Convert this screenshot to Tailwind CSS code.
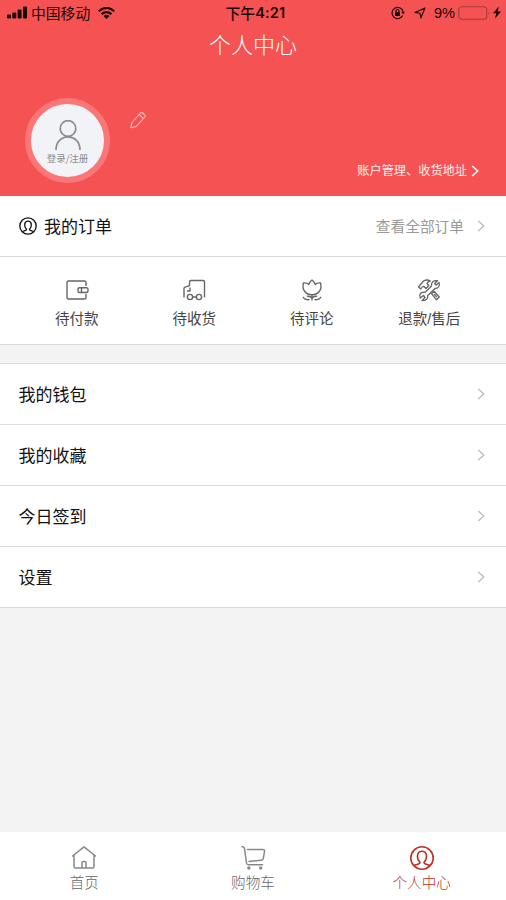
<!DOCTYPE html>
<html lang="zh-CN">
<head>
<meta charset="utf-8">
<title>个人中心</title>
<script src="https://cdn.jsdelivr.net/npm/@tailwindcss/browser@4"></script>
</head>
<body class="bg-[#f3f3f3]">
<div class="w-[506px] h-[900px] flex flex-col overflow-hidden font-['Noto_Sans_CJK_SC',sans-serif] text-[#111]">
  <header class="h-[196px] shrink-0 bg-[#f55353] flex flex-col">
    <div class="h-[25px] grid grid-cols-3 items-center text-[#1d0505]">
      <div class="flex items-center pl-[7px]">
        <svg class="w-5 h-[13px]" viewBox="0 0 20 13" fill="currentColor"><rect x="0" y="8.5" width="4" height="4" rx="1"/><rect x="5.3" y="6.5" width="4" height="6" rx="1"/><rect x="10.6" y="3.5" width="4" height="9" rx="1"/><rect x="16" y="0.5" width="4" height="12" rx="1"/></svg>
        <span class="ml-1 text-[14.8px] leading-6">中国移动</span>
        <svg class="ml-2 w-[17px] h-3" viewBox="0 0 17 12" fill="none" stroke="currentColor" stroke-width="2.2"><path d="M.8 4.3Q8.500-2.500 16.200 4.300M3.500 7.200Q8.500 3 13.500 7.200"/><path d="M5.500 9Q8.500 6.700 11.500 9L8.500 12Z" fill="currentColor" stroke="none"/></svg>
      </div>
      <div class="flex items-center justify-center text-[14.8px] leading-6 font-medium pl-[5px]"><span>下午</span><span class="font-['Inter',sans-serif] font-semibold text-[14.5px] tracking-[0.2px]">4:21</span></div>
      <div class="flex items-center justify-end pr-[5px]">
        <svg class="w-[14px] h-[14px]" viewBox="0 0 14 14" fill="none" stroke="currentColor" stroke-width="1.2"><path d="M11.600 9.500A5.600 5.600 0 1 1 12 5.500"/><path d="M10.300 5.700H14L12.200 8.300Z" fill="currentColor" stroke="none"/><rect x="4" y="6.200" width="5" height="3.800" fill="currentColor" stroke="none"/><path d="M5 6.500V5a1.500 1.500 0 0 1 3 0v1.500"/></svg>
        <svg class="ml-[9px] w-3 h-3" viewBox="0 0 12 12" fill="none" stroke="currentColor" stroke-width="1.1" stroke-linejoin="round"><path d="M11 1L1 5.400L6 6.200L6.800 11Z"/></svg>
        <span class="ml-2 font-['Liberation_Sans',sans-serif] text-[14.6px] leading-6">9%</span>
        <svg class="ml-[3px] w-8 h-[14px]" viewBox="0 0 32 14" fill="none"><rect x=".8" y=".8" width="28" height="12.400" rx="3" stroke="#a93a3a" stroke-width="1.100"/><path d="M30.500 5.300Q32.200 7 30.500 8.700Z" fill="#a93a3a"/></svg>
        <svg class="ml-[3px] w-[8px] h-[13px]" viewBox="0 0 8 13" fill="currentColor"><path d="M5.800.5L0 7.300H3.300L2 12.500L8 5.500H4.700Z"/></svg>
      </div>
    </div>
    <h1 class="h-[39px] text-center text-[22px] leading-[37px] font-light text-white">个人中心</h1>
    <div class="flex-1 flex justify-between pl-[25px] pr-[27px]">
      <div class="flex items-start pt-[34px]">
        <div class="size-[85px] rounded-full border-[6px] border-[#fb7777] bg-[#f2f3f7] flex flex-col items-center pt-4 text-[#8a8b8e]">
          <svg class="w-[26px] h-[30px] shrink-0" viewBox="0 0 26 30" fill="none" stroke="currentColor" stroke-width="1.700"><circle cx="13" cy="8.500" r="7.800"/><path d="M1 30C1 12.500 25 12.500 25 30"/></svg>
          <span class="text-[9.5px] leading-[14px] mt-px whitespace-nowrap">登录/注册</span>
        </div>
        <svg class="ml-5 mt-[13px] w-4 h-[18px]" viewBox="0 0 16 18" fill="none" stroke="#ffbebe" stroke-width="1.100" stroke-linejoin="round"><path d="M.8 16.800L2 11.500L10.500 2Q11.500.8 12.700 2L14.800 4Q15.600 5 14.800 6L6.200 15.500Z"/><path d="M9.300 3.400L13.400 7.500"/></svg>
      </div>
      <div class="self-end flex items-center mb-[15px] text-white/90 text-[12.2px] leading-5"><span class="pb-px">账户管理、收货地址</span>
        <svg class="ml-[4px] w-2 h-3" viewBox="0 0 8 12" fill="none" stroke="#fff" stroke-width="1.600"><path d="M1.200 1L6.700 6L1.200 11"/></svg></div>
    </div>
  </header>

  <section class="h-[149px] shrink-0 bg-white border-b border-[#d9d9d9]">
    <div class="h-[61px] border-b border-[#d9d9d9] flex items-center pl-[19px] pr-[21px]">
      <svg class="w-[18px] h-[18px]" viewBox="0 0 24 24" fill="none" stroke="currentColor" stroke-width="1.800"><circle cx="12" cy="12" r="10.900"/><path d="M4.500 19.500C6 18 10 18.800 10 16.200C6.200 12.500 6.800 5.500 12 5.500S17.800 12.500 14 16.200C14 18.800 18 18 19.500 19.500"/></svg>
      <span class="ml-[7px] text-[17px] leading-6">我的订单</span>
      <span class="ml-auto pb-px text-[14.7px] leading-6 text-[#999]">查看全部订单</span>
      <svg class="ml-[13px] w-2 h-3" viewBox="0 0 8 12" fill="none" stroke="#bcbcbc" stroke-width="1.300"><path d="M1.200 1L6.800 6L1.200 11"/></svg>
    </div>
    <div class="grid grid-cols-4 px-[18px] pt-[21px] text-[14.5px] leading-6 text-[#444]">
      <div class="flex flex-col items-center">
        <svg class="w-6 h-6" viewBox="0 0 24 24" fill="none" stroke="#666" stroke-width="1.400" stroke-linejoin="round"><path d="M21 8V4.500Q21 3 19.500 3H3.500Q2 3 2 4.500V19.500Q2 21 3.500 21H19.500Q21 21 21 19.500V16"/><rect x="13" y="9.700" width="10" height="4.800" rx="1.500"/><path d="M16.500 10V14"/></svg>
        <span class="mt-1">待付款</span></div>
      <div class="flex flex-col items-center">
        <svg class="w-6 h-6" viewBox="0 0 24 24" fill="none" stroke="#666" stroke-width="1.400" stroke-linejoin="round"><path d="M2 19.500V10.500Q2 9.500 3 9.200L7.500 7.700V4Q7.500 2.500 9 2.500H21Q22.500 2.500 22.500 4V19.500M8 9.500V13H5M10.500 19H14"/><circle cx="8" cy="19" r="2.600"/><circle cx="17" cy="19" r="2.600"/></svg>
        <span class="mt-1">待收货</span></div>
      <div class="flex flex-col items-center">
        <svg class="w-6 h-6" viewBox="0 0 24 24" fill="none" stroke="#666" stroke-width="1.400" stroke-linejoin="round" stroke-linecap="round"><path d="M3.500 5Q6.500 4.500 8.700 6.500Q10 3.500 12 2Q14 3.500 15.300 6.500Q17.500 4.500 20.500 5C22.500 12 18 16.800 12 16.800S1.500 12 3.500 5ZM12 17V22M12 20.200Q10 17.800 7.500 18.300M12 20.200Q14 17.800 16.500 18.300M3.300 19.300Q4.500 21.800 9 21.800M20.700 19.300Q19.500 21.800 15 21.800"/></svg>
        <span class="mt-1">待评论</span></div>
      <div class="flex flex-col items-center">
        <svg class="w-6 h-6" viewBox="0 0 24 24" fill="none" stroke="#666" stroke-width="1.300" stroke-linejoin="round"><path d="M1.500 9L6.500 3Q10 1 13.300 3Q10.800 3.500 10 5.500L11.800 7.500L9 10.500L7 8.500Q5.500 8 3.800 11ZM14.500 15.700L17 13.200L22.300 19L19.500 21.800ZM17 16L19.800 19"/><path d="M20.500 2.700L17.700 5.500L19 7.200L22 4.500Q23.500 10 18 10.500L10.800 17.500Q11 23 5 22.700L8 19.500L6.500 17.500L3.300 20Q1 14 8.500 14L14.500 8Q14 2 20.500 2.700Z"/></svg>
        <span class="mt-1">退款<span class="font-['Liberation_Sans',sans-serif]">/</span>售后</span></div>
    </div>
  </section>

  <nav class="mt-[18px] shrink-0 bg-white border-t border-[#d9d9d9] text-[17px] leading-6">
    <a class="h-[61px] flex items-center justify-between pl-[18.5px] pr-[21px] pb-px border-b border-[#dedede]"><span>我的钱包</span><svg class="w-2 h-3" viewBox="0 0 8 12" fill="none" stroke="#bcbcbc" stroke-width="1.300"><path d="M1.200 1L6.800 6L1.200 11"/></svg></a>
    <a class="h-[61px] flex items-center justify-between pl-[18.5px] pr-[21px] pb-px border-b border-[#dedede]"><span>我的收藏</span><svg class="w-2 h-3" viewBox="0 0 8 12" fill="none" stroke="#bcbcbc" stroke-width="1.300"><path d="M1.200 1L6.800 6L1.200 11"/></svg></a>
    <a class="h-[61px] flex items-center justify-between pl-[18.5px] pr-[21px] border-b border-[#d9d9d9]"><span>今日签到</span><svg class="w-2 h-3" viewBox="0 0 8 12" fill="none" stroke="#bcbcbc" stroke-width="1.300"><path d="M1.200 1L6.800 6L1.200 11"/></svg></a>
    <a class="h-[61px] flex items-center justify-between pl-[18.5px] pr-[21px] border-b border-[#d9d9d9]"><span>设置</span><svg class="w-2 h-3" viewBox="0 0 8 12" fill="none" stroke="#bcbcbc" stroke-width="1.300"><path d="M1.200 1L6.800 6L1.200 11"/></svg></a>
  </nav>

  <footer class="mt-auto h-[68px] shrink-0 bg-white grid grid-cols-3 pt-[13px] text-[14.6px] leading-[22px] font-light text-[#666]">
    <div class="flex flex-col items-center">
      <svg class="w-[26px] h-[26px]" viewBox="0 0 26 26" fill="none" stroke="#888" stroke-width="1.500" stroke-linejoin="round" stroke-linecap="round"><path d="M1.500 11L13 1.800L24.500 11M3 10V21.500Q3 23 4.500 23H21.500Q23 23 23 21.500V10M11 22.500V17.500Q11 16.500 12 16.500H14Q15 16.500 15 17.500V22.500"/></svg>
      <span>首页</span></div>
    <div class="flex flex-col items-center">
      <svg class="w-[26px] h-[26px]" viewBox="0 0 26 26" fill="none" stroke="#888" stroke-width="1.500" stroke-linejoin="round" stroke-linecap="round"><path d="M2 1.800Q4 1.500 4.500 3.500L6.500 18Q6.800 19.800 8.500 19.800H22.500M7.500 4.500H22.800Q24.800 4.500 24.500 6.500L23.300 13.500Q23 15 21.300 15.200L9 16.500"/><g fill="#888" stroke="none"><circle cx="8.800" cy="23" r="1.700"/><circle cx="20.700" cy="23" r="1.700"/></g></svg>
      <span>购物车</span></div>
    <div class="flex flex-col items-center text-[#bd3228]">
      <svg class="w-[26px] h-[26px]" viewBox="0 0 26 26" fill="none" stroke="currentColor" stroke-width="1.600"><circle cx="13" cy="13" r="11.200"/><path d="M5 20.500C7 19 11.200 19.800 11 17.300C7.200 13.500 7.500 6.300 13 6.300S18.800 13.500 15 17.300C14.800 19.800 19 19 21 20.500"/></svg>
      <span>个人中心</span></div>
  </footer>
</div>
</body>
</html>
